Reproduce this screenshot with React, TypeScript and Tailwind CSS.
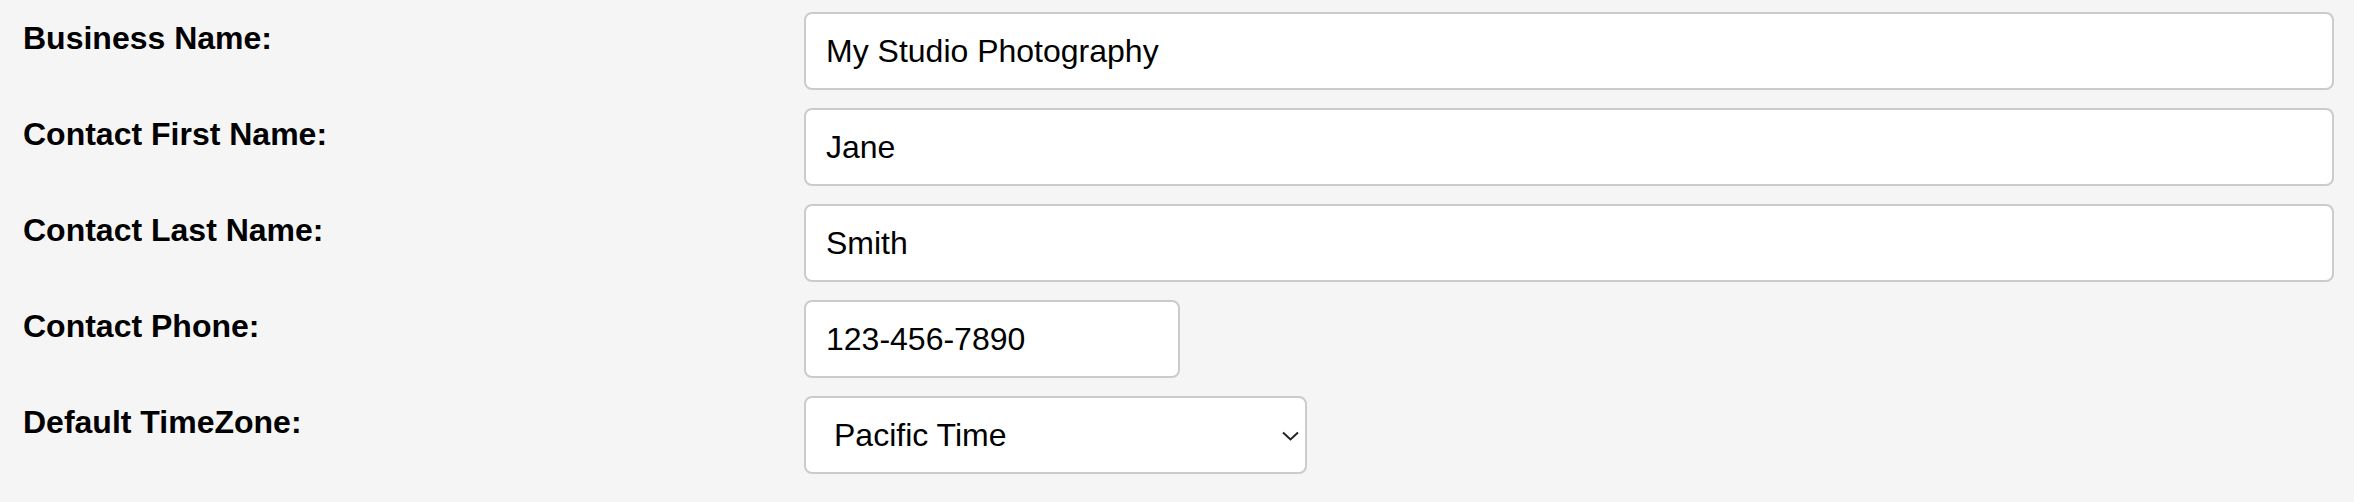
import { ChangeEvent, useState } from "react";

const labelCls =
  "w-[781px] shrink-0 pt-[8px] text-[32px] leading-[36px] font-bold text-black";
const inputCls =
  "h-[78px] rounded-[8px] border-2 border-[#cbcbcb] bg-white pl-[20px] pr-4 text-[32px] text-black outline-none";

function Row({ label, children }: { label: string; children: React.ReactNode }) {
  return (
    <div className="flex items-start">
      <label className={labelCls}>{label}</label>
      {children}
    </div>
  );
}

export default function App() {
  const [form, setForm] = useState({
    business: "My Studio Photography",
    first: "Jane",
    last: "Smith",
    phone: "123-456-7890",
    tz: "pacific",
  });

  const set = (k: keyof typeof form) => (e: ChangeEvent<HTMLInputElement | HTMLSelectElement>) =>
    setForm({ ...form, [k]: e.target.value });

  return (
    <div
      className="min-h-screen bg-[#f5f5f5] pl-[23px] pr-[20px] pt-[12px] pb-[28px]"
      style={{ fontFamily: '"Liberation Sans", Arial, sans-serif' }}
    >
      <div className="flex flex-col gap-[18px]">
        <Row label="Business Name:">
          <input className={`${inputCls} flex-1 min-w-0`} value={form.business} onChange={set("business")} />
        </Row>
        <Row label="Contact First Name:">
          <input className={`${inputCls} flex-1 min-w-0`} value={form.first} onChange={set("first")} />
        </Row>
        <Row label="Contact Last Name:">
          <input className={`${inputCls} flex-1 min-w-0`} value={form.last} onChange={set("last")} />
        </Row>
        <Row label="Contact Phone:">
          <input className={`${inputCls} w-[376px]`} value={form.phone} onChange={set("phone")} />
        </Row>
        <Row label="Default TimeZone:">
          <div className="relative w-[503px]">
            <select
              className="h-[78px] w-full appearance-none rounded-[8px] border-2 border-[#cbcbcb] bg-white pl-[28px] pr-12 text-[32px] text-black outline-none"
              value={form.tz}
              onChange={set("tz")}
            >
              <option value="pacific">Pacific Time</option>
              <option value="mountain">Mountain Time</option>
              <option value="central">Central Time</option>
              <option value="eastern">Eastern Time</option>
            </select>
            <svg
              className="pointer-events-none absolute right-[8px] top-[35px]"
              width="17"
              height="10"
              viewBox="0 0 17 10"
              fill="none"
            >
              <path d="M1 1.5 L8.5 8.5 L16 1.5" stroke="#222" strokeWidth="2" />
            </svg>
          </div>
        </Row>
      </div>
    </div>
  );
}
